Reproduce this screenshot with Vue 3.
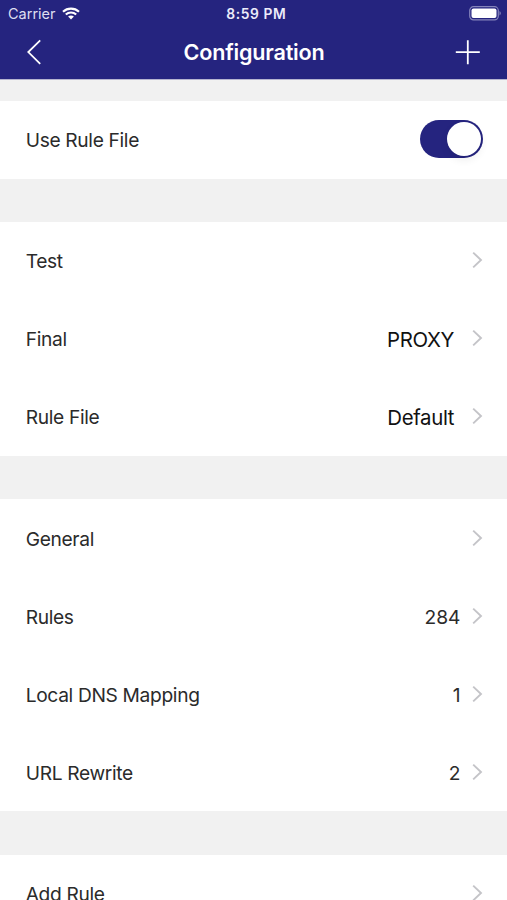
<script setup>
import { ref } from 'vue'

const useRuleFile = ref(true)

const groups = [
  [
    { label: 'Test' },
    { label: 'Final', value: 'PROXY', strong: true },
    { label: 'Rule File', value: 'Default', strong: true },
  ],
  [
    { label: 'General' },
    { label: 'Rules', value: '284' },
    { label: 'Local DNS Mapping', value: '1' },
    { label: 'URL Rewrite', value: '2' },
  ],
  [{ label: 'Add Rule' }],
]
</script>

<template>
  <div class="screen">
    <header class="header">
      <div class="status">
        <div class="carrier">
          <span>Carrier</span>
          <svg class="wifi" width="18" height="13" viewBox="0 0 18 13">
            <path d="M1 4.7C5.5.6 12.5.6 17 4.7" />
            <path d="M3.8 7.5c3-2.7 7.4-2.7 10.4 0" />
            <path class="dot" d="M6.1 9.6c1.7-1.5 4.1-1.5 5.8 0L9 12.6z" />
          </svg>
        </div>
        <span class="time">8:59 PM</span>
        <div class="battery">
          <svg width="33" height="15" viewBox="0 0 33 15">
            <rect class="shell" x="0.7" y="0.7" width="28.6" height="13.2" rx="3.8" />
            <rect class="charge" x="2.5" y="2.5" width="25" height="9.6" rx="2" />
            <path class="tip" d="M30.5 5.1c1.8.7 1.8 3.7 0 4.4z" />
          </svg>
        </div>
      </div>
      <div class="nav">
        <button class="icon-button" aria-label="Back">
          <svg width="15" height="26" viewBox="0 0 15 26">
            <path d="M14.2 1.4 2.3 13.1l11.9 11.7" />
          </svg>
        </button>
        <h1>Configuration</h1>
        <button class="icon-button add" aria-label="Add">
          <svg width="26" height="26" viewBox="0 0 26 26">
            <path d="M12.8 1.2v24M.8 13.2h24" />
          </svg>
        </button>
      </div>
    </header>

    <main class="content">
      <section class="group">
        <div class="row">
          <span class="label">Use Rule File</span>
          <button
            class="switch"
            :class="{ on: useRuleFile }"
            role="switch"
            :aria-checked="useRuleFile"
            aria-label="Use Rule File"
            @click="useRuleFile = !useRuleFile"
          >
            <span class="thumb"></span>
          </button>
        </div>
      </section>

      <section v-for="(rows, i) in groups" :key="i" class="group">
        <div v-for="row in rows" :key="row.label" class="row">
          <span class="label">{{ row.label }}</span>
          <span v-if="row.value" class="value" :class="{ strong: row.strong }">{{ row.value }}</span>
          <svg class="chevron" width="12" height="18" viewBox="0 0 12 18">
            <path d="M2.2 1.6 10 9l-7.8 7.4" />
          </svg>
        </div>
      </section>
    </main>
  </div>
</template>

<style>
body {
  margin: 0;
  overflow: hidden;
}
</style>

<style scoped>
.screen {
  display: flex;
  flex-direction: column;
  width: 100%;
  height: 900px;
  overflow: hidden;
  background: #f1f1f1;
  font-family: Inter, "Liberation Sans", sans-serif;
  color: #2b2b2b;
}

.header {
  flex: none;
  box-sizing: border-box;
  height: 79px;
  background: #25247f;
  box-shadow: 0 1px 0 #b5b4d0;
  color: #fff;
}

.status {
  display: grid;
  grid-template-columns: 1fr auto 1fr;
  align-items: center;
  height: 27px;
  padding: 0 5px 0 8px;
  font-size: 14.5px;
}

.carrier {
  display: flex;
  align-items: center;
  gap: 6px;
  color: #dedef0;
}

.wifi path {
  fill: none;
  stroke: #fff;
  stroke-width: 2.2;
}

.wifi .dot {
  fill: #fff;
  stroke: none;
}

.time {
  padding-left: 2.5px;
  font-size: 13.8px;
  font-weight: 600;
  letter-spacing: 0.6px;
  color: #ececfa;
}

.battery {
  display: flex;
  justify-content: flex-end;
}

.shell {
  fill: none;
  stroke: #8584bb;
  stroke-width: 1.2;
}

.charge {
  fill: #fff;
}

.tip {
  fill: #8584bb;
}

.nav {
  display: grid;
  grid-template-columns: 1fr auto 1fr;
  align-items: center;
  height: 50px;
  padding: 0 26px;
}

.nav h1 {
  margin: 0;
  padding-left: 1px;
  font-size: 21.6px;
  font-weight: 600;
  line-height: 26px;
  letter-spacing: -0.2px;
}

.icon-button {
  display: flex;
  justify-self: start;
  padding: 0;
  border: 0;
  background: none;
}

.icon-button.add {
  justify-self: end;
}

.icon-button path {
  fill: none;
  stroke: #fff;
  stroke-width: 1.8;
}

.content {
  display: flex;
  flex-direction: column;
  gap: 43.4px;
  padding-top: 22px;
}

.group {
  background: #fff;
}

.row {
  display: flex;
  align-items: center;
  box-sizing: border-box;
  height: 78px;
  padding: 1px 24px 0 25.7px;
  font-size: 19.2px;
}

.group:first-child .row {
  height: 77.6px;
  padding-top: 0;
}

.label {
  flex: 1;
  letter-spacing: -0.34px;
}

.value {
  margin-right: 10.5px;
}

.value.strong {
  margin-right: 16.9px;
  color: #111;
  font-size: 20.4px;
  letter-spacing: -0.35px;
}

.chevron {
  position: relative;
  top: -1px;
}

.chevron path {
  fill: none;
  stroke: #c4c4c8;
  stroke-width: 1.9;
}

.switch {
  display: flex;
  align-items: center;
  box-sizing: border-box;
  width: 63px;
  height: 38px;
  margin-bottom: 1px;
  padding: 2px;
  border: 0;
  border-radius: 19px;
  background: #d8d8dc;
}

.switch.on {
  justify-content: flex-end;
  background: #25247f;
}

.thumb {
  width: 34px;
  height: 34px;
  border-radius: 50%;
  background: #fff;
  box-shadow: 0 4px 8px rgba(0, 0, 0, 0.07);
}
</style>
